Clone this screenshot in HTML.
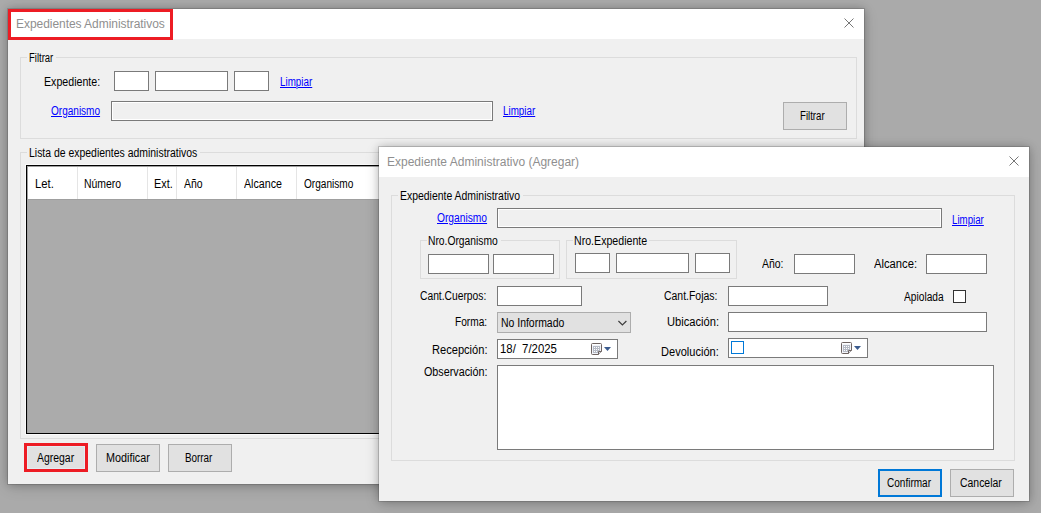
<!DOCTYPE html>
<html><head><meta charset="utf-8"><style>
*{margin:0;padding:0;box-sizing:border-box}
html,body{width:1041px;height:513px;overflow:hidden;background:#aaaaaa;font-family:"Liberation Sans",sans-serif}
.a{position:absolute}
.t{position:absolute;font-size:12px;line-height:14px;color:#000;white-space:nowrap;transform-origin:0 0}
.lnk{color:#0000ff;text-decoration:underline}
.win{position:absolute;background:#f0f0f0;box-shadow:0 0 0 1px rgba(60,60,60,0.22), 0 0 8px rgba(0,0,0,0.22), 0 3px 14px rgba(0,0,0,0.16)}
.tb{position:absolute;left:0;top:0;right:0;height:30px;background:#fff}
.ttl{position:absolute;font-size:12px;line-height:14px;color:#8f8f8f;white-space:nowrap}
</style></head><body>
<div class="win" style="left:8px;top:9px;width:856px;height:475px"><div class="tb"></div></div>
<div class="ttl" style="left:16px;top:17px;letter-spacing:-0.05px">Expedientes Administrativos</div>
<div class="a" style="left:8px;top:9px;width:165px;height:31px;border:3px solid #ed1c24"></div>
<svg class="a" style="left:844px;top:18px" width="10" height="10"><path d="M0.5 0.5L9.5 9.5M9.5 0.5L0.5 9.5" stroke="#777" stroke-width="1"/></svg>
<div class="a" style="left:20px;top:57px;width:1px;height:82px;background:#dcdcdc"></div>
<div class="a" style="left:856px;top:57px;width:1px;height:82px;background:#dcdcdc"></div>
<div class="a" style="left:20px;top:138px;width:837px;height:1px;background:#dcdcdc"></div>
<div class="a" style="left:20px;top:57px;width:7px;height:1px;background:#dcdcdc"></div>
<div class="a" style="left:56px;top:57px;width:801px;height:1px;background:#dcdcdc"></div>
<div class="a" style="left:114px;top:71px;width:35px;height:20px;border:1px solid #7a7a7a;background:#fff;"></div>
<div class="a" style="left:155px;top:71px;width:73px;height:20px;border:1px solid #7a7a7a;background:#fff;"></div>
<div class="a" style="left:234px;top:71px;width:35px;height:20px;border:1px solid #7a7a7a;background:#fff;"></div>
<div class="a" style="left:111px;top:101px;width:382px;height:20px;border:1px solid #7a7a7a;background:#f0f0f0;box-shadow:inset 0 0 0 1px #fff"></div>
<div class="a" style="left:783px;top:102px;width:64px;height:28px;background:#e1e1e1;border:1px solid #adadad"></div>
<div class="a" style="left:20px;top:152px;width:1px;height:287px;background:#dcdcdc"></div>
<div class="a" style="left:856px;top:152px;width:1px;height:287px;background:#dcdcdc"></div>
<div class="a" style="left:20px;top:438px;width:837px;height:1px;background:#dcdcdc"></div>
<div class="a" style="left:20px;top:152px;width:7px;height:1px;background:#dcdcdc"></div>
<div class="a" style="left:200px;top:152px;width:657px;height:1px;background:#dcdcdc"></div>
<div class="a" style="left:25px;top:164px;width:828px;height:271px;border:1px solid #fafafa"></div>
<div class="a" style="left:26px;top:165px;width:826px;height:269px;border:1px solid #000;background:#ababab"></div>
<div class="a" style="left:27px;top:166px;width:824px;height:1px;background:#a0a0a0"></div>
<div class="a" style="left:27px;top:166px;width:1px;height:267px;background:#a0a0a0"></div>
<div class="a" style="left:28px;top:167px;width:822px;height:32px;background:#fff"></div>
<div class="a" style="left:28px;top:199px;width:822px;height:1px;background:#9f9f9f"></div>
<div class="a" style="left:77px;top:167px;width:1px;height:32px;background:#e5e5e5"></div>
<div class="a" style="left:147px;top:167px;width:1px;height:32px;background:#e5e5e5"></div>
<div class="a" style="left:176px;top:167px;width:1px;height:32px;background:#e5e5e5"></div>
<div class="a" style="left:236px;top:167px;width:1px;height:32px;background:#e5e5e5"></div>
<div class="a" style="left:296px;top:167px;width:1px;height:32px;background:#e5e5e5"></div>
<div class="a" style="left:27px;top:446px;width:58px;height:23px;background:#e1e1e1;border:1px solid #e3ecf2"></div>
<div class="a" style="left:24px;top:443px;width:64px;height:29px;border:3px solid #ed1c24"></div>
<div class="a" style="left:96px;top:444px;width:64px;height:28px;background:#e1e1e1;border:1px solid #adadad"></div>
<div class="a" style="left:168px;top:444px;width:64px;height:28px;background:#e1e1e1;border:1px solid #adadad"></div>
<div class="win" style="left:379px;top:147px;width:650px;height:354px"><div class="tb"></div></div>
<div class="ttl" style="left:387px;top:155px">Expediente Administrativo (Agregar)</div>
<svg class="a" style="left:1009px;top:156px" width="10" height="10"><path d="M0.5 0.5L9.5 9.5M9.5 0.5L0.5 9.5" stroke="#777" stroke-width="1"/></svg>
<div class="a" style="left:391px;top:195px;width:1px;height:266px;background:#dcdcdc"></div>
<div class="a" style="left:1014px;top:195px;width:1px;height:266px;background:#dcdcdc"></div>
<div class="a" style="left:391px;top:460px;width:624px;height:1px;background:#dcdcdc"></div>
<div class="a" style="left:391px;top:195px;width:7px;height:1px;background:#dcdcdc"></div>
<div class="a" style="left:523px;top:195px;width:492px;height:1px;background:#dcdcdc"></div>
<div class="a" style="left:497px;top:208px;width:445px;height:20px;border:1px solid #7a7a7a;background:#f0f0f0;box-shadow:inset 0 0 0 1px #fff"></div>
<div class="a" style="left:420px;top:240px;width:1px;height:39px;background:#dcdcdc"></div>
<div class="a" style="left:559px;top:240px;width:1px;height:39px;background:#dcdcdc"></div>
<div class="a" style="left:420px;top:278px;width:140px;height:1px;background:#dcdcdc"></div>
<div class="a" style="left:420px;top:240px;width:7px;height:1px;background:#dcdcdc"></div>
<div class="a" style="left:501px;top:240px;width:59px;height:1px;background:#dcdcdc"></div>
<div class="a" style="left:428px;top:254px;width:61px;height:20px;border:1px solid #7a7a7a;background:#fff;"></div>
<div class="a" style="left:493px;top:254px;width:61px;height:20px;border:1px solid #7a7a7a;background:#fff;"></div>
<div class="a" style="left:566px;top:240px;width:1px;height:39px;background:#dcdcdc"></div>
<div class="a" style="left:736px;top:240px;width:1px;height:39px;background:#dcdcdc"></div>
<div class="a" style="left:566px;top:278px;width:171px;height:1px;background:#dcdcdc"></div>
<div class="a" style="left:566px;top:240px;width:7px;height:1px;background:#dcdcdc"></div>
<div class="a" style="left:649px;top:240px;width:88px;height:1px;background:#dcdcdc"></div>
<div class="a" style="left:575px;top:253px;width:35px;height:20px;border:1px solid #7a7a7a;background:#fff;"></div>
<div class="a" style="left:616px;top:253px;width:73px;height:20px;border:1px solid #7a7a7a;background:#fff;"></div>
<div class="a" style="left:695px;top:253px;width:35px;height:20px;border:1px solid #7a7a7a;background:#fff;"></div>
<div class="a" style="left:794px;top:254px;width:61px;height:20px;border:1px solid #7a7a7a;background:#fff;"></div>
<div class="a" style="left:926px;top:254px;width:61px;height:20px;border:1px solid #7a7a7a;background:#fff;"></div>
<div class="a" style="left:497px;top:286px;width:85px;height:20px;border:1px solid #7a7a7a;background:#fff;"></div>
<div class="a" style="left:728px;top:286px;width:100px;height:20px;border:1px solid #7a7a7a;background:#fff;"></div>
<div class="a" style="left:953px;top:290px;width:13px;height:13px;border:1px solid #333;background:#fff"></div>
<div class="a" style="left:497px;top:312px;width:134px;height:21px;border:1px solid #adadad;background:#e1e1e1"></div>
<svg class="a" style="left:618px;top:320px" width="10" height="7"><path d="M0.4 1L4.4 5L8.4 1" stroke="#3c3c3c" stroke-width="1.2" fill="none"/></svg>
<div class="a" style="left:728px;top:312px;width:259px;height:20px;border:1px solid #7a7a7a;background:#fff;"></div>
<div class="a" style="left:497px;top:339px;width:121px;height:20px;border:1px solid #7a7a7a;background:#fff;"></div>
<div class="a" style="left:728px;top:338px;width:140px;height:20px;border:1px solid #7a7a7a;background:#fff;"></div>
<div class="a" style="left:731px;top:341px;width:13px;height:13px;border:1px solid #0078d7"></div>
<svg class="a" style="left:591px;top:343px" width="21" height="13" shape-rendering="crispEdges">
<path d="M1.5 0.5H9.5Q10.5 0.5 10.5 1.5V8.5L7.5 11.5H1.5Q0.5 11.5 0.5 10.5V1.5Q0.5 0.5 1.5 0.5Z" fill="#f2f4f9" stroke="#6e6462" shape-rendering="geometricPrecision"/>
<rect x="1" y="1" width="9" height="1" fill="#ffffff"/>
<rect x="2" y="3" width="7" height="7" fill="#b6bbc6"/>
<g fill="#fff"><rect x="3" y="4" width="1" height="1"/><rect x="5" y="4" width="1" height="1"/><rect x="7" y="4" width="1" height="1"/><rect x="3" y="6" width="1" height="1"/><rect x="5" y="6" width="1" height="1"/><rect x="7" y="6" width="1" height="1"/><rect x="3" y="8" width="1" height="1"/><rect x="5" y="8" width="1" height="1"/><rect x="7" y="8" width="1" height="1"/></g>
<path d="M7.5 11.5V8.5H10.5" fill="#d8dce4" stroke="#6e6462" shape-rendering="geometricPrecision"/>
<path d="M13 4H20L16.5 8Z" fill="#3b5b8e" shape-rendering="geometricPrecision"/></svg>
<svg class="a" style="left:841px;top:342px" width="21" height="13" shape-rendering="crispEdges">
<path d="M1.5 0.5H9.5Q10.5 0.5 10.5 1.5V8.5L7.5 11.5H1.5Q0.5 11.5 0.5 10.5V1.5Q0.5 0.5 1.5 0.5Z" fill="#f2f4f9" stroke="#6e6462" shape-rendering="geometricPrecision"/>
<rect x="1" y="1" width="9" height="1" fill="#ffffff"/>
<rect x="2" y="3" width="7" height="7" fill="#b6bbc6"/>
<g fill="#fff"><rect x="3" y="4" width="1" height="1"/><rect x="5" y="4" width="1" height="1"/><rect x="7" y="4" width="1" height="1"/><rect x="3" y="6" width="1" height="1"/><rect x="5" y="6" width="1" height="1"/><rect x="7" y="6" width="1" height="1"/><rect x="3" y="8" width="1" height="1"/><rect x="5" y="8" width="1" height="1"/><rect x="7" y="8" width="1" height="1"/></g>
<path d="M7.5 11.5V8.5H10.5" fill="#d8dce4" stroke="#6e6462" shape-rendering="geometricPrecision"/>
<path d="M13 4H20L16.5 8Z" fill="#3b5b8e" shape-rendering="geometricPrecision"/></svg>
<div class="a" style="left:497px;top:365px;width:497px;height:85px;border:1px solid #7a7a7a;background:#fff;"></div>
<div class="a" style="left:878px;top:469px;width:64px;height:28px;background:#e1e1e1;border:2px solid #0078d7"></div>
<div class="a" style="left:950px;top:469px;width:64px;height:28px;background:#e1e1e1;border:1px solid #adadad"></div>
<div class="t " style="left:28.60px;top:51px;transform:scaleX(0.7903)">Filtrar</div>
<div class="t " style="left:44.10px;top:75px;transform:scaleX(0.8861)">Expediente:</div>
<div class="t lnk" style="left:280.10px;top:75px;transform:scaleX(0.8188)">Limpiar</div>
<div class="t lnk" style="left:51.10px;top:104px;transform:scaleX(0.8359)">Organismo</div>
<div class="t lnk" style="left:503.10px;top:104px;transform:scaleX(0.8188)">Limpiar</div>
<div class="t " style="left:800.10px;top:109px;transform:scaleX(0.8044)">Filtrar</div>
<div class="t " style="left:28.60px;top:146px;transform:scaleX(0.8700)">Lista de expedientes administrativos</div>
<div class="t " style="left:35.30px;top:177px;transform:scaleX(0.9407)">Let.</div>
<div class="t " style="left:84.30px;top:177px;transform:scaleX(0.8700)">Número</div>
<div class="t " style="left:154.40px;top:177px;transform:scaleX(0.9041)">Ext.</div>
<div class="t " style="left:184.30px;top:177px;transform:scaleX(0.8700)">Año</div>
<div class="t " style="left:243.50px;top:177px;transform:scaleX(0.8888)">Alcance</div>
<div class="t " style="left:303.50px;top:177px;transform:scaleX(0.8410)">Organismo</div>
<div class="t " style="left:37.10px;top:451px;transform:scaleX(0.8700)">Agregar</div>
<div class="t " style="left:105.70px;top:451px;transform:scaleX(0.8997)">Modificar</div>
<div class="t " style="left:184.60px;top:451px;transform:scaleX(0.8210)">Borrar</div>
<div class="t " style="left:399.60px;top:189px;transform:scaleX(0.8700)">Expediente Administrativo</div>
<div class="t lnk" style="left:437.10px;top:211px;transform:scaleX(0.8529)">Organismo</div>
<div class="t lnk" style="left:951.50px;top:213px;transform:scaleX(0.8090)">Limpiar</div>
<div class="t " style="left:428.10px;top:234px;transform:scaleX(0.8576)">Nro.Organismo</div>
<div class="t " style="left:573.90px;top:234px;transform:scaleX(0.8848)">Nro.Expediente</div>
<div class="t " style="left:762.10px;top:257px;transform:scaleX(0.8700)">Año:</div>
<div class="t " style="left:874.10px;top:257px;transform:scaleX(0.9358)">Alcance:</div>
<div class="t " style="left:420.10px;top:289px;transform:scaleX(0.8570)">Cant.Cuerpos:</div>
<div class="t " style="left:663.60px;top:289px;transform:scaleX(0.8700)">Cant.Fojas:</div>
<div class="t " style="left:904.10px;top:290px;transform:scaleX(0.8488)">Apiolada</div>
<div class="t " style="left:454.80px;top:315px;transform:scaleX(0.8454)">Forma:</div>
<div class="t " style="left:500.90px;top:316px;transform:scaleX(0.8700)">No Informado</div>
<div class="t " style="left:666.60px;top:315px;transform:scaleX(0.9284)">Ubicación:</div>
<div class="t " style="left:431.60px;top:343px;transform:scaleX(0.9246)">Recepción:</div>
<div class="t " style="left:500.10px;top:342px;transform:scaleX(0.9468)">18/&nbsp; 7/2025</div>
<div class="t " style="left:660.60px;top:345px;transform:scaleX(0.9209)">Devolución:</div>
<div class="t " style="left:423.70px;top:365px;transform:scaleX(0.8971)">Observación:</div>
<div class="t " style="left:886.90px;top:476px;transform:scaleX(0.8360)">Confirmar</div>
<div class="t " style="left:959.90px;top:476px;transform:scaleX(0.8700)">Cancelar</div>
</body></html>
